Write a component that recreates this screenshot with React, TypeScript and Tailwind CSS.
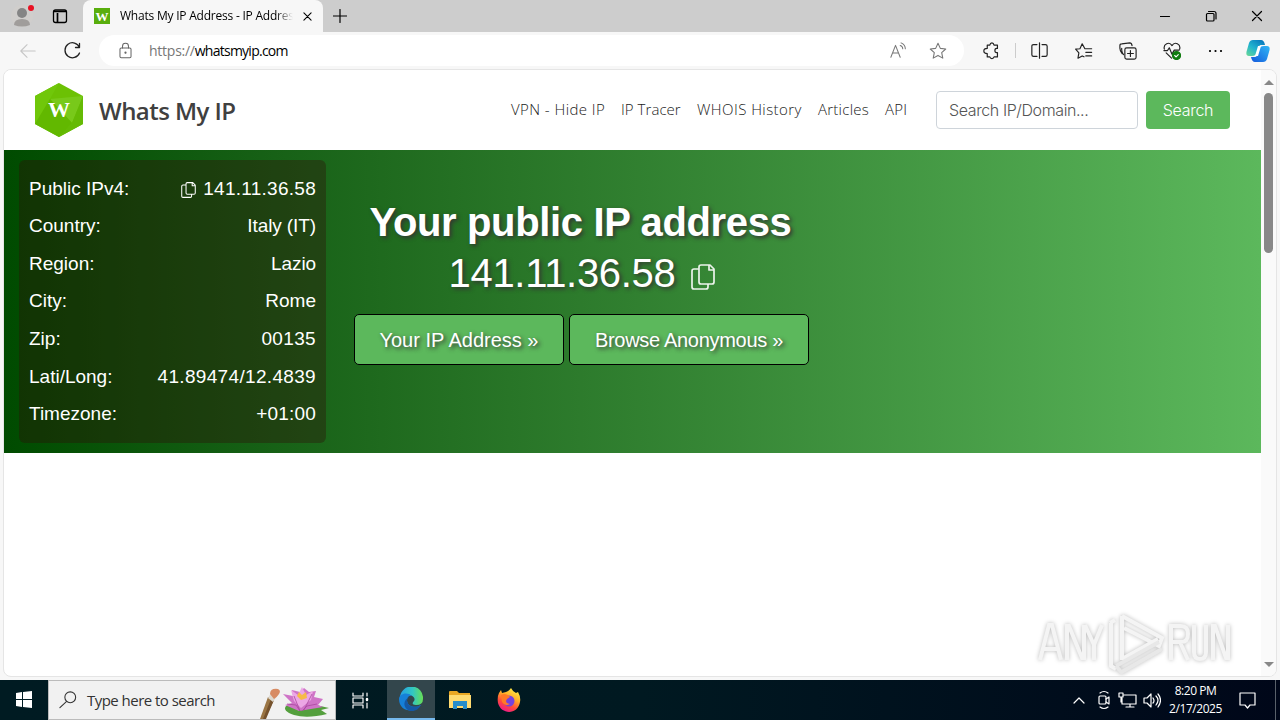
import type { ReactNode } from 'react';

const NAV = [
  { label: 'VPN - Hide IP', width: 'w-[94px] tracking-[0.43px]' },
  { label: 'IP Tracer', width: 'w-[60px] tracking-[0.05px]' },
  { label: 'WHOIS History', width: 'w-[105px] tracking-[0.44px]' },
  { label: 'Articles', width: 'w-[51px] tracking-[0.25px]' },
  { label: 'API', width: 'w-[24px] tracking-[0.2px]' },
];

const DETAILS = [
  { label: 'Public IPv4:', value: '141.11.36.58', copy: true, spacing: 'tracking-[0.27px]' },
  { label: 'Country:', value: 'Italy (IT)', spacing: 'tracking-[-0.1px]' },
  { label: 'Region:', value: 'Lazio', spacing: 'tracking-[-0.1px]' },
  { label: 'City:', value: 'Rome', spacing: 'tracking-normal' },
  { label: 'Zip:', value: '00135', spacing: 'tracking-[0.35px]' },
  { label: 'Lati/Long:', value: '41.89474/12.4839', spacing: 'tracking-[0.33px]' },
  { label: 'Timezone:', value: '+01:00', spacing: 'tracking-[0.2px]' },
];

function Icon({ children, className = '', box = '0 0 20 20' }: { children: ReactNode; className?: string; box?: string }) {
  return (
    <svg viewBox={box} className={`shrink-0 ${className}`} fill="none" stroke="currentColor" strokeWidth="1.2" strokeLinecap="round" strokeLinejoin="round">
      {children}
    </svg>
  );
}

function CopyIcon({ className }: { className: string }) {
  return (
    <Icon box="0 0 24 26" className={className}>
      <path strokeWidth="1.7" d="M10 1h9l4 4v13q0 2-2 2H10q-2 0-2-2V3q0-2 2-2zM18 1v5h5M8 5H3q-2 0-2 2v16q0 2 2 2h12q2 0 2-2v-3" />
    </Icon>
  );
}

function TabStrip() {
  return (
    <div className="flex h-8 bg-[#cdcdcd] text-black">
      <svg viewBox="0 0 83 32" className="h-8 w-[83px] shrink-0" fill="none">
        <circle cx="22" cy="16" r="11" fill="#d0cecc" />
        <circle cx="22" cy="13" r="5" fill="#858585" />
        <path d="M14 25q0-6 8-6t8 6q-8 3-16 0z" fill="#a09d9b" />
        <circle cx="31" cy="8" r="3" fill="#e81123" />
        <rect x="53.500" y="10" width="13" height="12.500" rx="2" stroke="#000" strokeWidth="1.300" />
        <path d="M54 11.500h12M57.500 13v9" stroke="#000" strokeWidth="1.700" />
      </svg>
      <div className="flex w-[240px] shrink-0 items-center rounded-t-lg bg-[#f7f7f7] pl-[11px]">
        <div className="flex size-4 items-center justify-center bg-[#59ae0d] font-['Liberation_Serif'] text-[13px] leading-none font-bold text-white">W</div>
        <div className="ml-[10px] w-[173px] overflow-hidden whitespace-nowrap font-['Open_Sans'] text-[12px] tracking-[-0.22px] [mask-image:linear-gradient(to_right,#000_90%,transparent)]">
          Whats My IP Address - IP Address
        </div>
        <Icon className="ml-[10px] size-[9px]" box="0 0 10 10"><path d="m1 1 8 8M9 1 1 9" /></Icon>
      </div>
      <Icon className="mt-[9px] ml-[10px] size-[14px]" box="0 0 14 14"><path d="M7 .5v13M.5 7h13" /></Icon>
      <Icon className="mt-[10px] ml-auto h-3 w-[106px]" box="0 0 106 12">
        <path d="M.5 6.500h9" />
        <rect x="46.500" y="3.500" width="7.500" height="7.500" rx="1" />
        <path d="M48.500 1.500H54q2 0 2 2V9M92.500 1.500l9 9m0-9-9 9" />
      </Icon>
      <div className="w-[14px]" />
    </div>
  );
}

function Toolbar() {
  return (
    <div className="flex h-[37px] items-center bg-[#f7f7f7]">
      <Icon className="ml-[19px] size-[18px] text-[#c6c6c6]"><path d="M18 10H2m7-7-7 7 7 7" /></Icon>
      <Icon className="ml-[25px] size-5 text-[#222]"><path strokeWidth="1.300" d="M17.500 6.500A7.500 7.500 0 1 0 17.500 12M17.500 2.500v4h-4" /></Icon>
      <div className="ml-[17px] flex h-[31px] w-[865px] items-center rounded-full bg-white pl-[18px] font-['Open_Sans'] text-[14px] text-black">
        <Icon className="size-[17px] text-[#666]"><rect x="3.500" y="7" width="13" height="11.500" rx="1.500" /><path d="M6.500 7V5q0-3.500 3.500-3.500T13.500 5v2" /><circle cx="10" cy="12.500" r=".7" fill="currentColor" /></Icon>
        <div className="ml-[15px] whitespace-nowrap tracking-[-0.75px]"><span className="tracking-[-0.25px] text-[#777]">https://</span>whatsmyip.com</div>
        <Icon className="ml-auto h-[17px] w-[17px] text-[#777]"><path d="m1 18 5.500-14L12 18M3 13h7M12 4q3 1 3 4M13 1q5 2 5 7" /></Icon>
        <Icon className="mr-[17px] ml-[22px] size-[18px] text-[#777]"><path d="m10 1.500 2.600 5.600 6 .7-4.500 4.100 1.200 6-5.300-3-5.300 3 1.200-6L1.400 7.800l6-.7z" /></Icon>
      </div>
      <Icon className="ml-[19px] h-[18px] w-[17px] text-[#222]"><path strokeWidth="1.400" d="M5 3h3q.5-2.500 2.500-2.500T13 3h4v4h-1q-2 0-2 2.500t2 2.500h1v5h-4q-.5 2-2.500 2T8 17H5v-4q-4 0-4-3t4-3z" /></Icon>
      <div className="ml-[15px] h-[15px] w-px bg-[#ccc]" />
      <Icon className="ml-[15px] h-[17px] w-[17px] text-[#222]"><path strokeWidth="1.400" d="M10 1v18M7 3H3Q1 3 1 5v10q0 2 2 2h4M13 3h4q2 0 2 2v10q0 2-2 2h-4" /></Icon>
      <Icon className="ml-[27px] size-[18px] text-[#222]"><path strokeWidth="1.300" d="M11 7.500 8 2 5.500 7.500.7 8l3.600 4-1 6L8 15.500l2 1M11 7.500h7.500M12 11.500h6.500M12 15.500h6.500" /></Icon>
      <Icon className="ml-[26px] size-[18px] text-[#222]"><path strokeWidth="1.300" d="M3.500 13Q1 10 1 7V4q0-2 2-2l9-1q2 0 2.500 3M5 14Q3 12 3 9V7" /><rect strokeWidth="1.300" x="6.500" y="6.500" width="12.500" height="12.500" rx="2" /><path strokeWidth="1.300" d="M12.700 9.500v6.500m-3.200-3.200H16" /></Icon>
      <Icon className="ml-[26px] size-[18px] text-[#222]"><path strokeWidth="1.300" d="M1.500 8C0 2 7-1 10 4c3-5 10-2 8.500 4M1 9.500h4l2-3 3 7 2.500-4.500H18M3.500 12l6 6" /><circle cx="15" cy="15" r="4.500" fill="#107c10" stroke="#107c10" /><path d="m13 15 1.500 1.500L17 14" stroke="#fff" /></Icon>
      <Icon className="ml-[27px] h-[4px] w-[15px] text-black" box="0 0 15 4"><path strokeWidth="2.200" d="M2 2h.01M7.500 2h.01M13 2h.01" /></Icon>
      <Copilot />
    </div>
  );
}

function Copilot() {
  return (
    <svg viewBox="0 0 24 24" className="mr-[10px] ml-auto size-6 shrink-0">
      <defs>
        <linearGradient id="pilotLeft" x1="0" y1="1" x2=".8" y2="0"><stop stopColor="#6bd994" /><stop offset=".5" stopColor="#21b4cf" /><stop offset="1" stopColor="#0879bd" /></linearGradient>
        <linearGradient id="pilotRight" x1="1" y1="0" x2="0" y2="1"><stop stopColor="#30b7f5" /><stop offset="1" stopColor="#1459dc" /></linearGradient>
      </defs>
      <path d="M7 1h8q3 0 4 5h-4q-2 0-3 4l-1 3q-1 4-5 4H3q-4 0-2-6l2-7q1-3 4-3z" fill="url(#pilotLeft)" />
      <path d="M17 23H9q-3 0-4-5h4q2 0 3-4l1-4q1-3 5-3h3q4 0 2 6l-2 7q-1 3-4 3z" fill="url(#pilotRight)" />
      <path d="m12 7-3 10h3l3-10z" fill="#fff" />
    </svg>
  );
}

function SiteHeader() {
  return (
    <header className="flex h-20 items-center bg-white pl-[30px]">
      <svg viewBox="0 0 50 56" className="h-[56px] w-[50px] shrink-0">
        <path d="M25 1 49 14v28L25 55 1 42V14z" fill="#6cc104" />
        <path d="M25 1 16 17 1 42V14z" fill="#70c70a" />
        <path d="m16 17 33-3-11 27z" fill="#78c91a" />
        <path d="m1 42 15-25 22 24-13 14z" fill="#62b800" />
        <path d="m38 41 11-27v28L25 55z" fill="#65ba05" />
        <text x="25" y="35" textAnchor="middle" fill="#fff" fontFamily="Liberation Serif" fontWeight="bold" fontSize="22">W</text>
      </svg>
      <h1 className="ml-[15px] w-[139px] pt-px font-['Open_Sans'] text-[24px] font-semibold tracking-[-0.55px] whitespace-nowrap text-[#404040]">Whats My IP</h1>
      <nav className="ml-auto flex gap-4 pb-px font-['Open_Sans'] text-[15px] font-light whitespace-nowrap text-[#222]">
        {NAV.map((item) => (
          <a key={item.label} className={item.width}>{item.label}</a>
        ))}
      </nav>
      <div className="ml-[27px] flex h-[38px] w-[202px] items-center rounded border border-[#ced4da] pl-3 font-['Inter'] text-[16px] font-light tracking-[-0.4px] text-[#555]">Search IP/Domain...</div>
      <button className="mr-[31px] ml-2 h-[38px] w-[84px] rounded bg-[#5cb85c] font-['Inter'] text-[16px] font-light tracking-[-0.3px] text-white">Search</button>
    </header>
  );
}

function Hero() {
  return (
    <section className="flex h-[303px] bg-linear-to-r from-[#004b00] to-[#5cb85c] font-['Liberation_Sans'] text-white">
      <div className="mt-[10px] ml-[15px] flex h-[283px] w-[307px] shrink-0 flex-col rounded-md bg-[#300c08]/36 px-[10px] pt-[10px] text-[19px]">
        {DETAILS.map((row) => (
          <div key={row.label} className="flex h-[37.6px] items-center justify-between whitespace-nowrap">
            <span>{row.label}</span>
            <span className={`flex items-center ${row.spacing}`}>
              {row.copy && <CopyIcon className="mt-[2px] mr-[7px] h-4 w-[15px]" />}
              {row.value}
            </span>
          </div>
        ))}
      </div>
      <div className="ml-[28px] w-[455px] shrink-0 pt-[48px] [text-shadow:2px_2px_4px_#333]">
        <h2 className="pr-[2px] text-center text-[40px] leading-[48px] font-bold tracking-[-0.36px] whitespace-nowrap">Your public IP address</h2>
        <div className="mt-[3px] flex items-center justify-center pl-[0px] text-[40px] leading-[48px] tracking-[-0.3px]">
          141.11.36.58
          <CopyIcon className="mt-[7px] ml-[15px] h-[26px] w-[24px] opacity-90" />
        </div>
        <div className="mt-[17px] flex gap-[5px] text-[20px] whitespace-nowrap">
          <button className="h-[51px] w-[210px] rounded-[5px] border border-black bg-[#5cb85c] [text-shadow:inherit]">Your IP Address »</button>
          <button className="h-[51px] w-[240px] rounded-[5px] border border-black bg-[#5cb85c] tracking-[-0.3px] [text-shadow:inherit]">Browse Anonymous »</button>
        </div>
      </div>
    </section>
  );
}

function Watermark() {
  return (
    <svg viewBox="0 0 200 66" className="absolute right-[39px] bottom-0 h-[66px] w-[200px] [filter:drop-shadow(0_0_2px_#bbb)]" fill="none" stroke="#f4f4f4" strokeWidth="4">
      <path d="m3 50 9-35h3l9 35M7 39h14M30 50V16h2l13 32h2V15M48 15l9 20 8-20M57 35v15" />
      <path d="M74 13v43l5 3M73 13l5-3M85 6v44M85 6l40 22-3 8-35-18M85 49l36-20" />
      <path d="m79 56 43-24M83 63l42-24M79 56l6 7" stroke="#e8e8e8" />
      <path d="M134 50V16h10q7 0 7 8t-7 8h-10m9 0 8 18M157 15v27q0 7 6 7t6-7V15M176 50V16h2l11 32h2V15" />
    </svg>
  );
}

function Lotus() {
  return (
    <svg viewBox="0 0 76 38" className="h-[38px] w-[76px] shrink-0">
      <path d="m4 38 8-22 6 3-9 19z" fill="#9a7544" />
      <path d="m7 38 8-20 3 1-8 19z" fill="#75522d" />
      <path d="m12 17 3-5 6 3-4 6z" fill="#ddd8ce" />
      <path d="M14 13q0-6 8-5c5 2-1 8-4 10z" fill="#d78b63" />
      <path d="M30 25q18-7 30-1l13 3-8 2 6 4q-20 5-33 1-12-4-8-9z" fill="#549f3d" />
      <path d="m43 30-14-6 7-2-9-9 10 2-1-6 8 2 4-4 5 4 7-1-2 6 9 2-5 6 5 2z" fill="#cf74c7" />
      <path d="m38 20-3-11 7 5 4-8 4 8 7-4-2 9-10 8z" fill="#eca7e5" />
      <path d="m31 23 9 1 4 6M61 23l-10 2-5 5M38 15l6 15M56 13l-8 16" fill="none" stroke="#a9479e" strokeWidth=".8" />
      <path d="m41 15 2-4 3 3 4-3 1 6-6 2z" fill="#f6bb48" />
    </svg>
  );
}

function Taskbar() {
  return (
    <footer className="flex h-10 shrink-0 bg-linear-to-r from-[#001b22] via-[#001921] to-[#000719] text-white">
      <svg viewBox="0 0 48 40" className="h-10 w-12 shrink-0" fill="#fff"><path d="m16 13 6-1v7h-6zm7-1 9-1v8h-9zm-7 8h6v7l-6-1zm7 0h9v8l-9-1z" /></svg>
      <div className="flex w-[288px] shrink-0 items-center border border-[#bbb] bg-[#f1f1f1] pl-[10px] text-[#333]">
        <Icon className="size-[18px]"><circle cx="12.500" cy="7" r="6" /><path d="m8.500 11.500-7.500 7" /></Icon>
        <span className="ml-[10px] font-['Open_Sans'] text-[15px] tracking-[-0.53px] whitespace-nowrap">Type here to search</span>
        <div className="ml-auto pr-[3px]"><Lotus /></div>
      </div>
      <div className="flex w-[51px] shrink-0 items-center justify-center pr-[2px]">
        <Icon className="size-[17px]" box="0 0 17 17"><path d="M1 1v3h10V1M1 16v-3h10v3M1 6h10v5H1zM15 1v3M15 11v5" /><path d="M15 7v1" strokeWidth="2.500" /></Icon>
      </div>
      <div className="flex w-12 shrink-0 items-center justify-center border-b-2 border-[#76b9ed] bg-[#33464c]">
        <svg viewBox="0 0 24 24" className="size-6">
          <defs>
            <linearGradient id="edgeTop"><stop stopColor="#259fe5" /><stop offset=".55" stopColor="#32c7c2" /><stop offset="1" stopColor="#68df55" /></linearGradient>
          </defs>
          <path d="M1 10A11.500 11.500 0 0 1 24 12q0 6-7 6c-4 0-4-2-2-4 3-5-7-9-14-4z" fill="url(#edgeTop)" />
          <path d="M0 12C0 7 8 4 13 9q-4-1-5 4c0 6 7 9 14 5C16 27 0 25 0 12z" fill="#1680d8" />
          <path d="M8 13c0 6 7 9 14 5q-4 7-11 6C3 21 4 12 11 10q-3 1-3 3z" fill="#1558a5" />
        </svg>
      </div>
      <div className="flex w-[49px] shrink-0 items-center justify-center">
        <svg viewBox="0 0 22 20" className="h-5 w-[22px]">
          <path d="M0 2q0-1 1-1h7l2 2h11v15H0z" fill="#eaa823" /><path d="M0 5h22v13H0z" fill="#ffdb70" /><path d="M4 19v-8h14v8h-4v-3H8v3z" fill="#258dcb" />
        </svg>
      </div>
      <div className="flex w-[50px] shrink-0 items-center justify-center">
        <svg viewBox="0 0 24 24" className="size-6">
          <defs>
            <linearGradient id="fox" x1=".8" y1="0" x2=".3" y2="1"><stop stopColor="#fff34a" /><stop offset=".4" stopColor="#ffad28" /><stop offset=".7" stopColor="#ff493b" /><stop offset="1" stopColor="#ed178d" /></linearGradient>
          </defs>
          <path d="M2 5 4 2l1 3 4-1q3-1 5-4 2 4 5 5l2-1q3 5 2 10C21 27 4 27 1 15Q0 9 2 5z" fill="url(#fox)" />
          <circle cx="12" cy="13" r="5.500" fill="#7542df" /><path d="M4 7q5-3 9 2l-3 2q-3 4 3 5-5 3-8-2z" fill="#ff7a26" />
        </svg>
      </div>
      <Icon className="mt-[9px] ml-auto h-[22px] w-[88px]" box="0 0 88 22">
        <path d="m1 14 5-5 5 5" />
        <rect x="26" y="7" width="7" height="8" rx="1" /><path d="m33 10 3-2v7l-3-2M27 4q4-3 8 0M27 18q4 3 8 0" />
        <path d="M51 6h12v9H49V9M57 15v3m-4 0h8M46 4h4v4h-4zM48 8v5" />
        <path d="M71 9h3l4-4v13l-4-4h-3zM80 9q2 3 0 5M83 7q4 4 0 9M85 5q5 6 0 13" />
      </Icon>
      <div className="ml-[7px] w-[55px] pt-[2px] text-center font-['Open_Sans'] text-[12px] leading-[18px] tracking-[-0.45px] whitespace-nowrap">8:20 PM<br />2/17/2025</div>
      <Icon className="mt-3 ml-[16px] h-[17px] w-[17px]" box="0 0 17 17"><path d="M1 1h15v12h-5l-2.500 3L6 13H1z" /></Icon>
      <div className="mr-[4px] ml-[19px] w-px bg-[#59616a]" />
    </footer>
  );
}

export default function App() {
  return (
    <main className="flex h-[720px] w-[1280px] flex-col overflow-hidden bg-[#f7f7f7]">
      <TabStrip />
      <Toolbar />
      <div className="relative mr-[3px] mb-[3px] ml-[3px] flex h-[608px] overflow-hidden rounded-lg border border-[#e5e5e5] bg-white">
        <div className="w-[1257px] shrink-0">
          <SiteHeader />
          <Hero />
        </div>
        <div className="flex w-[15px] flex-col items-center bg-[#fafafa] pt-[10px] pb-[9px]">
          <div className="size-0 border-x-[5px] border-b-[5px] border-x-transparent border-b-[#888]" />
          <div className="mt-[8px] h-[160px] w-[9px] rounded-full bg-[#888]" />
          <div className="mt-auto size-0 border-x-[5px] border-t-[5px] border-x-transparent border-t-[#888]" />
        </div>
        <Watermark />
      </div>
      <Taskbar />
    </main>
  );
}
